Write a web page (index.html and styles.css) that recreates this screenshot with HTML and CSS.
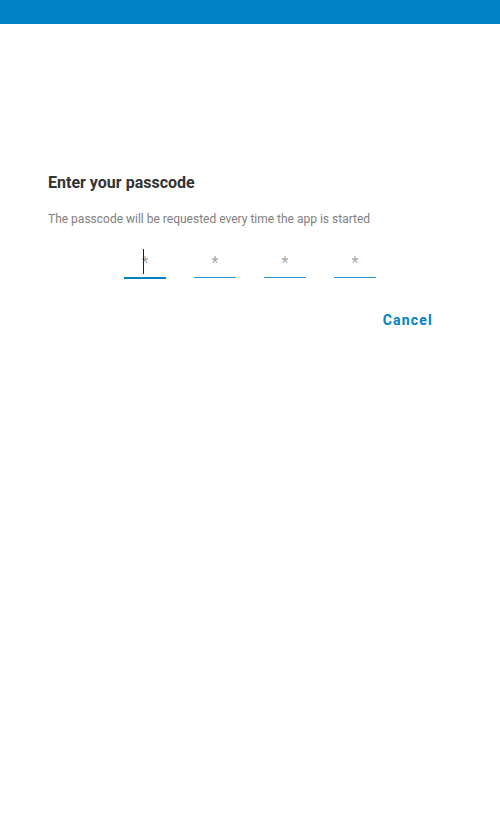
FILE: index.html
```html
<!DOCTYPE html>
<html lang="en">
<head>
<meta charset="utf-8">
<title>Enter your passcode</title>
<link rel="stylesheet" href="styles.css">
</head>
<body>
<div class="statusbar"></div>
<main class="dialog">
  <div class="texts">
    <h1 class="title">Enter your passcode</h1>
    <p class="subtitle">The passcode will be requested every time the app is started</p>
  </div>
  <div class="pins">
    <div class="pin pin-focused"><span class="caret"></span><span class="ph">*</span></div>
    <div class="pin"><span class="ph">*</span></div>
    <div class="pin"><span class="ph">*</span></div>
    <div class="pin"><span class="ph">*</span></div>
  </div>
  <div class="actions">
    <button class="btn-cancel" type="button">Cancel</button>
  </div>
</main>
</body>
</html>
```
FILE: styles.css
```css
html, body {
  margin: 0;
  padding: 0;
  background: #ffffff;
}
body {
  font-family: Roboto, "Noto Sans", "Liberation Sans", sans-serif;
  width: 500px;
  height: 833px;
}
.statusbar {
  height: 24px;
  background: #0081c6;
}
.dialog {
  padding-top: 149px;
}
.texts {
  padding-left: 48px;
  padding-right: 48px;
}
.title {
  margin: 0;
  font-size: 16px;
  line-height: 20px;
  font-weight: 700;
  color: #333333;
}
.subtitle {
  margin: 18px 0 0 0;
  font-size: 12px;
  line-height: 16px;
  color: #808080;
}
.pins {
  margin-top: 20px;
  display: flex;
  justify-content: center;
  gap: 28px;
}
.pin {
  position: relative;
  width: 42px;
  height: 31px;
  border-bottom: 1px solid #2e97d4;
  display: flex;
  align-items: center;
  justify-content: center;
  box-sizing: border-box;
}
.pin-focused {
  border-bottom: 2px solid #0081c6;
  height: 32px;
}
.ph {
  font-size: 16px;
  line-height: 16px;
  color: #a8a8a8;
  margin-top: 2px;
}
.caret {
  position: absolute;
  left: 19px;
  top: 2px;
  width: 1px;
  height: 25px;
  background: #222222;
}
.actions {
  display: flex;
  justify-content: flex-end;
  padding-right: 67px;
  margin-top: 33px;
}
.btn-cancel {
  border: 0;
  background: transparent;
  padding: 0;
  font-family: Roboto, "Noto Sans", "Liberation Sans", sans-serif;
  font-size: 14px;
  line-height: 16px;
  font-weight: 700;
  letter-spacing: 1.2px;
  color: #0081c6;
  cursor: pointer;
}
```
